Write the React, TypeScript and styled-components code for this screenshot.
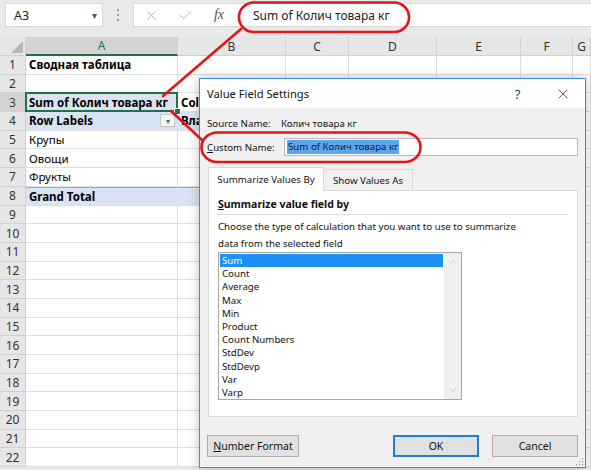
import React from 'react'
import styled, { createGlobalStyle, css } from 'styled-components'
import { X, Check, ChevronUp, ChevronDown } from 'lucide-react'

const GlobalStyle = createGlobalStyle`
  html, body {
    margin: 0;
    padding: 0;
    background: #fff;
  }
  body {
    width: 591px;
    height: 470px;
    overflow: hidden;
    font-family: 'Noto Sans', 'Open Sans', sans-serif;
  }
`

const COLUMNS = ['A', 'B', 'C', 'D', 'E', 'F', 'G']

type Row = {
  a?: string
  b?: string
  bold?: boolean
  fillA?: boolean
  fillB?: boolean
  rule?: boolean
  filter?: boolean
  selected?: boolean
}

const rows: Row[] = [
  { a: 'Сводная таблица', bold: true },
  {},
  { a: 'Sum of Колич товара кг', b: 'Column Labels', bold: true, fillA: true, selected: true },
  { a: 'Row Labels', b: 'Владелец', bold: true, fillA: true, fillB: true, filter: true },
  { a: 'Крупы' },
  { a: 'Овощи' },
  { a: 'Фрукты' },
  { a: 'Grand Total', bold: true, fillA: true, fillB: true, rule: true },
  ...Array.from({ length: 14 }, () => ({})),
]

const functions = [
  'Sum',
  'Count',
  'Average',
  'Max',
  'Min',
  'Product',
  'Count Numbers',
  'StdDev',
  'StdDevp',
  'Var',
  'Varp',
]

export default function App() {
  return (
    <Page>
      <GlobalStyle />
      <FormulaBar>
        <NameBox>
          <span>A3</span>
          <Caret>▾</Caret>
        </NameBox>
        <Grip>
          <i />
          <i />
          <i />
        </Grip>
        <FormulaBox>
          <IconSlot>
            <X size={15} strokeWidth={1.3} />
          </IconSlot>
          <IconSlot>
            <Check size={15} strokeWidth={1.3} />
          </IconSlot>
          <IconSlot>
            <Fx>fx</Fx>
          </IconSlot>
          <FormulaText>Sum of Колич товара кг</FormulaText>
        </FormulaBox>
      </FormulaBar>

      <Sheet>
        <Corner>
          <svg width="12" height="12" viewBox="0 0 12 12">
            <path d="M12 0 L12 12 L0 12 Z" fill="#b7b7b7" />
          </svg>
        </Corner>
        {COLUMNS.map((c) => (
          <ColHead key={c} $active={c === 'A'}>
            {c}
          </ColHead>
        ))}
        {rows.map((r, i) => (
          <React.Fragment key={i}>
            <RowHead $active={i === 2}>{i + 1}</RowHead>
            <Cell $bold={r.bold} $fill={r.fillA} $rule={r.rule} $selected={r.selected}>
              <CellText>{r.a}</CellText>
              {r.filter && <FilterButton>▾</FilterButton>}
            </Cell>
            <Cell $bold={r.bold} $fill={r.fillB} $rule={r.rule}>
              <CellText>{r.b}</CellText>
            </Cell>
            {COLUMNS.slice(2).map((c) => (
              <Cell key={c} />
            ))}
          </React.Fragment>
        ))}
      </Sheet>

      <Dialog>
        <TitleBar>
          <Title>Value Field Settings</Title>
          <TitleButton>?</TitleButton>
          <TitleButton>
            <X size={16} strokeWidth={1.2} />
          </TitleButton>
        </TitleBar>
        <Body>
          <SourceRow>
            <span>Source Name:</span>
            <span>Колич товара кг</span>
          </SourceRow>
          <CustomRow>
            <span>
              <u>C</u>ustom Name:
            </span>
            <NameInput>
              <Selected>Sum of Колич товара кг</Selected>
            </NameInput>
          </CustomRow>
          <TabStrip>
            <Tab $active>Summarize Values By</Tab>
            <Tab>Show Values As</Tab>
          </TabStrip>
          <Panel>
            <Heading>
              <u>S</u>ummarize value field by
            </Heading>
            <Description>
              Choose the type of calculation that you want to use to summarize
              <br />
              data from the selected field
            </Description>
            <ListBox>
              <Items>
                {functions.map((f, i) => (
                  <Item key={f} $selected={i === 0}>
                    {f}
                  </Item>
                ))}
              </Items>
              <ScrollBar>
                <ChevronUp size={12} strokeWidth={1.5} />
                <ChevronDown size={12} strokeWidth={1.5} />
              </ScrollBar>
            </ListBox>
          </Panel>
          <Footer>
            <Button $width={92}>
              <u>N</u>umber Format
            </Button>
            <Spacer />
            <Button $width={86} $default>
              OK
            </Button>
            <Button $width={86}>Cancel</Button>
          </Footer>
        </Body>
        <ResizeGrip width="10" height="10" viewBox="0 0 10 10">
          <g fill="#9a9a9a">
            <rect x="8" y="2" width="1.2" height="1.2" />
            <rect x="5" y="5" width="1.2" height="1.2" />
            <rect x="8" y="5" width="1.2" height="1.2" />
            <rect x="2" y="8" width="1.2" height="1.2" />
            <rect x="5" y="8" width="1.2" height="1.2" />
            <rect x="8" y="8" width="1.2" height="1.2" />
          </g>
        </ResizeGrip>
      </Dialog>

      <Annotations width="591" height="470" viewBox="0 0 591 470">
        <g fill="none" stroke="#e3141c" strokeWidth="2.6" strokeLinecap="round">
          <rect x="239" y="2.5" width="170" height="29.5" rx="15" ry="14.5" />
          <rect x="201.5" y="132.5" width="219" height="29.5" rx="16" ry="14.5" />
          <line x1="241" y1="29" x2="163" y2="96" />
          <line x1="171" y1="111" x2="203" y2="141" />
        </g>
      </Annotations>
    </Page>
  )
}

const Page = styled.div`
  position: relative;
  width: 591px;
  height: 470px;
  overflow: hidden;
  background: #e9e9e9;
`

const FormulaBar = styled.div`
  display: flex;
  align-items: flex-start;
  height: 37px;
  box-sizing: border-box;
  padding: 3px 0 0 5px;
  background: #e9e9e9;
`

const NameBox = styled.div`
  width: 98px;
  height: 24px;
  box-sizing: border-box;
  display: flex;
  align-items: center;
  justify-content: space-between;
  padding: 0 5px 0 8px;
  background: #fff;
  border: 1px solid #dadada;
  font-size: 12.5px;
  color: #222;
`

const Caret = styled.span`
  font-size: 10px;
  color: #555;
`

const Grip = styled.div`
  width: 30px;
  height: 24px;
  display: flex;
  flex-direction: column;
  align-items: center;
  justify-content: center;
  gap: 3px;

  i {
    width: 2px;
    height: 2px;
    background: #9a9a9a;
  }
`

const FormulaBox = styled.div`
  flex: 1;
  height: 24px;
  display: flex;
  align-items: center;
  background: #fff;
  border: 1px solid #dadada;
  border-right: none;
  box-sizing: border-box;
`

const IconSlot = styled.div`
  width: 34px;
  display: flex;
  justify-content: center;
  color: #a8a8a8;
`

const Fx = styled.span`
  font-family: 'Liberation Serif', serif;
  font-style: italic;
  font-size: 14px;
  color: #555;
`

const FormulaText = styled.span`
  margin-left: 17px;
  font-size: 12px;
  color: #222;
`

const Sheet = styled.div`
  display: grid;
  grid-template-columns: 26px 152px 108px 63px 88px 84px 52px 1fr;
  grid-template-rows: 19px;
  grid-auto-rows: 18.7px;
  background: #fff;
`

const headCell = css`
  background: #e6e6e6;
  border-right: 1px solid #d0d0d0;
  border-bottom: 1px solid #d0d0d0;
  box-sizing: border-box;
  color: #333;
  font-size: 12px;
  display: flex;
  align-items: center;
  justify-content: center;
`

const Corner = styled.div`
  ${headCell};
  align-items: flex-end;
  justify-content: flex-end;
  padding: 0 2px 2px 0;
`

const ColHead = styled.div<{ $active?: boolean }>`
  ${headCell};
  ${(p) =>
    p.$active &&
    css`
      background: #d3d3d3;
      color: #217346;
      border-bottom: 2px solid #217346;
    `}
`

const RowHead = styled.div<{ $active?: boolean }>`
  ${headCell};
  ${(p) =>
    p.$active &&
    css`
      background: #d3d3d3;
      color: #444;
    `}
`

const Cell = styled.div<{ $bold?: boolean; $fill?: boolean; $rule?: boolean; $selected?: boolean }>`
  position: relative;
  display: flex;
  align-items: center;
  box-sizing: border-box;
  padding: 0 2px 0 3px;
  min-width: 0;
  border-right: 1px solid #dedede;
  border-bottom: 1px solid #dedede;
  font-size: 11.5px;
  color: #000;
  font-weight: ${(p) => (p.$bold ? 700 : 400)};
  background: ${(p) => (p.$fill ? '#dae3f3' : '#fff')};
  ${(p) =>
    p.$fill &&
    css`
      border-right-color: #dae3f3;
    `}
  ${(p) =>
    p.$rule &&
    css`
      border-top: 1px solid #8eaadb;
    `}
  ${(p) =>
    p.$selected &&
    css`
      &::after {
        content: '';
        position: absolute;
        inset: -1px -1px -1px -1px;
        border: 2px solid #217346;
        pointer-events: none;
      }
      &::before {
        content: '';
        position: absolute;
        right: -4px;
        bottom: -4px;
        width: 5px;
        height: 5px;
        background: #217346;
        border: 1px solid #fff;
        z-index: 1;
      }
    `}
`

const CellText = styled.span`
  flex: 1;
  white-space: nowrap;
  overflow: hidden;
`

const FilterButton = styled.span`
  width: 15px;
  height: 13px;
  box-sizing: border-box;
  display: flex;
  align-items: center;
  justify-content: center;
  border: 1px solid #c6c6c6;
  background: #f4f4f4;
  color: #666;
  font-size: 8px;
  font-weight: 400;
`

const Dialog = styled.div`
  position: absolute;
  left: 199px;
  top: 78px;
  width: 387px;
  height: 390px;
  box-sizing: border-box;
  display: flex;
  flex-direction: column;
  border: 1px solid #3b8ed8;
  background: #f0f0f0;
  box-shadow: 0 0 10px rgba(0, 0, 0, 0.25);
  font-family: 'Noto Sans', 'Open Sans', sans-serif;
  font-size: 9.7px;
  color: #111;
  z-index: 5;
`

const TitleBar = styled.div`
  height: 29px;
  flex: none;
  display: flex;
  align-items: center;
  padding-left: 7px;
  background: #fff;
  font-size: 11.2px;
`

const Title = styled.span`
  flex: 1;
`

const TitleButton = styled.span`
  width: 45px;
  display: flex;
  justify-content: center;
  font-size: 13px;
  color: #333;
`

const Body = styled.div`
  flex: 1;
  display: flex;
  flex-direction: column;
  padding: 0 7px;
`

const SourceRow = styled.div`
  display: grid;
  grid-template-columns: 74px 1fr;
  height: 16px;
  align-items: center;
  margin-top: 7px;
`

const CustomRow = styled.div`
  display: grid;
  grid-template-columns: 77px 1fr;
  align-items: center;
  margin-top: 7px;
`

const NameInput = styled.div`
  height: 18px;
  box-sizing: border-box;
  display: flex;
  align-items: center;
  padding-left: 2px;
  background: #fff;
  border: 1px solid #b9b9b9;
`

const Selected = styled.span`
  background: #5aa6ea;
  color: #0b1a3a;
  padding: 0 1px;
  line-height: 14px;
`

const TabStrip = styled.div`
  display: flex;
  align-items: flex-end;
  height: 23px;
  margin: 11px 0 0 1px;
`

const Tab = styled.div<{ $active?: boolean }>`
  box-sizing: border-box;
  display: flex;
  align-items: center;
  justify-content: center;
  border: 1px solid #d9d9d9;
  border-bottom: none;
  ${(p) =>
    p.$active
      ? css`
          width: 116px;
          background: #fff;
          position: relative;
          z-index: 1;
          margin-bottom: -1px;
          height: 24px;
        `
      : css`
          width: 89px;
          height: 21px;
          background: #f0f0f0;
          border-left: none;
        `}
`

const Panel = styled.div`
  width: 370px;
  height: 227px;
  box-sizing: border-box;
  margin-left: 1px;
  padding: 0 9px;
  background: #fff;
  border: 1px solid #d9d9d9;
`

const Heading = styled.div`
  margin-top: 6px;
  padding-bottom: 3px;
  border-bottom: 1px solid #dcdcdc;
  font-weight: 700;
  font-size: 10.5px;
`

const Description = styled.div`
  margin-top: 3px;
  line-height: 17px;
`

const ListBox = styled.div`
  width: 244px;
  height: 148px;
  box-sizing: border-box;
  display: flex;
  border: 1px solid #a6a6a6;
`

const Items = styled.div`
  flex: 1;
  padding: 1px;
`

const Item = styled.div<{ $selected?: boolean }>`
  height: 13.2px;
  line-height: 13.2px;
  padding-left: 2px;
  background: ${(p) => (p.$selected ? '#1e8ff5' : 'transparent')};
  color: ${(p) => (p.$selected ? '#fff' : '#111')};
`

const ScrollBar = styled.div`
  width: 17px;
  display: flex;
  flex-direction: column;
  justify-content: space-between;
  align-items: center;
  padding: 3px 0;
  background: #f0f0f0;
  color: #c2c2c2;
`

const Footer = styled.div`
  display: flex;
  margin-top: 18px;
  gap: 13px;
`

const Spacer = styled.div`
  flex: 1;
`

const Button = styled.div<{ $width: number; $default?: boolean }>`
  width: ${(p) => p.$width}px;
  height: 22px;
  box-sizing: border-box;
  display: flex;
  align-items: center;
  justify-content: center;
  background: #e1e1e1;
  border: ${(p) => (p.$default ? '2px solid #1c7fd6' : '1px solid #adadad')};
  font-size: 10.5px;
`

const ResizeGrip = styled.svg`
  position: absolute;
  right: 1px;
  bottom: 1px;
`

const Annotations = styled.svg`
  position: absolute;
  left: 0;
  top: 0;
  pointer-events: none;
  z-index: 10;
`
